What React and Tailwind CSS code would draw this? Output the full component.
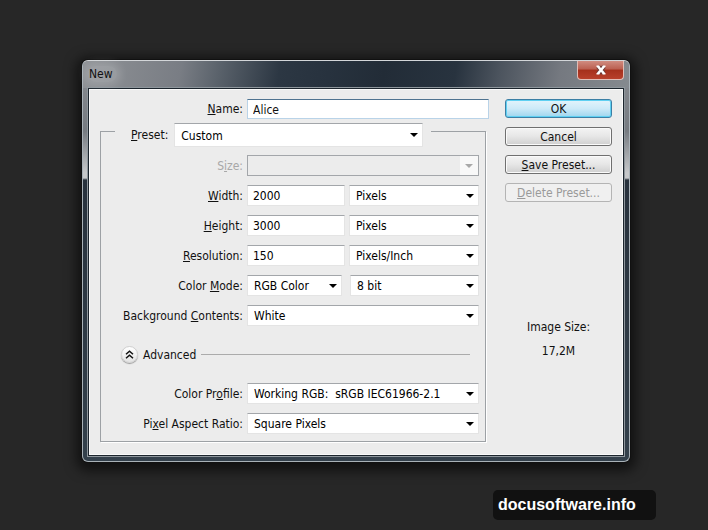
import { useState } from "react";

const inputBase =
  "h-[21px] min-w-0 bg-white border border-[#e4e4e4] border-t-[#a3a6aa] pt-px pl-[5px] text-black outline-none";

function Row({ id, label, children, disabled }) {
  return (
    <div className="flex items-center gap-1">
      <label
        htmlFor={id}
        className={`w-[142px] shrink-0 text-right whitespace-nowrap ${disabled ? "text-[#a8a8a8]" : ""}`}
      >
        {label}
      </label>
      <div className="flex flex-1 min-w-0 gap-1">{children}</div>
    </div>
  );
}

function Select({ id, options, className = "", selectClass = "h-[21px] pt-px", disabled, ...rest }) {
  return (
    <div className={`relative min-w-0 ${className}`}>
      <select
        id={id}
        disabled={disabled}
        className={`block w-full appearance-none border pl-[6px] pr-5 outline-none ${selectClass} ${
          disabled
            ? "border-[#a3a6aa] bg-[#ececec] opacity-100"
            : "bg-white border-[#e4e4e4] border-t-[#a3a6aa] text-black"
        }`}
        {...rest}
      >
        {options.map((o) => (
          <option key={o}>{o}</option>
        ))}
      </select>
      <span
        className={`pointer-events-none absolute inset-y-px right-px flex w-4 items-center justify-center ${
          disabled ? "w-[18px] bg-[#f8f8f8] text-[#a8a8a8]" : "text-black"
        }`}
      >
        <svg width="8" height="4" viewBox="0 0 8 4" fill="currentColor">
          <path d="M0 0h8L4 4z" />
        </svg>
      </span>
    </div>
  );
}

const buttonBase = "h-[19px] w-full rounded-[3px] border pt-px leading-4 whitespace-nowrap";
const plainButton =
  "border-[#707070] bg-linear-to-b from-[#f4f4f4] via-[#e6e6e6] to-[#cfcfcf] shadow-[inset_0_0_0_1px_#fafafa]";

export default function App() {
  const [name, setName] = useState("Alice");
  const [width, setWidth] = useState("2000");
  const [height, setHeight] = useState("3000");
  const [resolution, setResolution] = useState("150");

  return (
    <div className="flex min-h-screen flex-col bg-[#272727] pt-[60px] pl-[82px] pr-[78px] font-['DejaVu_Sans_Condensed','Noto_Sans',sans-serif] text-[12px] leading-4 text-[#111]">
      <div
        role="dialog"
        aria-labelledby="title"
        className="rounded-[6px] border border-[#a9b2b8] border-t-[#d3d6d9] bg-[linear-gradient(to_bottom,#8b8e93_0,#767b81_70px,#c6c8ca_112px,#c6c8ca_117px,#28323d_119px,#34414c_100%)] px-[5px] pb-[5px] shadow-[0_0_0_1px_#111,0_3px_12px_6px_rgba(0,0,0,0.55)]"
      >
        <div className="-mx-[5px] flex h-[27px] items-start justify-between rounded-t-[5px] bg-[linear-gradient(100deg,#8f9296_0%,#797d84_18%,#5a626b_25%,#2c3743_36%,#27323e_45%,#222c37_55%,#28333f_68%,#4c545e_76%,#757980_87%,#858a8f_100%)] px-[5px]">
          <h1
            id="title"
            className="mt-[5px] rounded-full bg-white/15 pr-1 pl-px shadow-[0_0_8px_4px_rgba(255,255,255,0.15)]"
          >
            New
          </h1>
          <button
            aria-label="Close"
            className="flex h-[19px] w-[47px] items-center justify-center rounded-b-[4px] border border-t-0 border-[#e0bdb6] bg-[linear-gradient(to_bottom,#d08c80_0%,#bb5f50_45%,#a5301c_50%,#b8402b_100%)]"
          >
            <svg width="12" height="10" viewBox="0 0 12 10">
              <path d="M3 1.5l6 7M9 1.5l-6 7" stroke="#6b3a36" strokeWidth="4.4" />
              <path d="M3 1.5l6 7M9 1.5l-6 7" stroke="#fff" strokeWidth="2.6" />
              <path d="M1.5 1.2h3M7.5 1.2h3M1.5 8.8h3M7.5 8.8h3" stroke="#fff" strokeWidth="1.4" />
            </svg>
          </button>
        </div>

        <div className="flex border border-[#1c252d] bg-[#ececec] pt-[10px] pr-[11px] pb-[13px] pl-[11px] shadow-[0_0_0_1px_#8f979d,inset_0_0_0_1px_#fafafa]">
          <form className="min-w-0 flex-1">
            <div className="flex items-center gap-1">
              <label htmlFor="name" className="w-[143px] shrink-0 text-right">
                <u>N</u>ame:
              </label>
              <input
                id="name"
                value={name}
                onChange={(e) => setName(e.target.value)}
                className="h-5 min-w-0 flex-1 border border-[#b9d3e8] border-t-[#4f7390] bg-white pt-px pl-[5px] outline-none"
              />
            </div>

            <fieldset className="mt-1 mr-[3px] min-w-0 border border-[#9da1a5] pr-[6px] pb-[7px] shadow-[1px_1px_0_#fff]">
              <legend className="ml-[14px] flex h-4 items-start gap-[6px] pr-2 pl-4">
                <label htmlFor="preset" className="mt-1">
                  <u>P</u>reset:
                </label>
                <Select
                  id="preset"
                  options={["Custom"]}
                  className="w-[249px]"
                  selectClass="h-6 pt-px"
                />
              </legend>

              <div className="flex flex-col gap-[9px] pt-4">
                <Row id="size" label={<>S<u>i</u>ze:</>} disabled>
                  <Select id="size" options={[""]} className="flex-1" disabled />
                </Row>
                <Row id="width" label={<><u>W</u>idth:</>}>
                  <input id="width" value={width} onChange={(e) => setWidth(e.target.value)} className={`${inputBase} w-[98px]`} />
                  <Select aria-label="Width unit" options={["Pixels"]} className="flex-1" />
                </Row>
                <Row id="height" label={<><u>H</u>eight:</>}>
                  <input id="height" value={height} onChange={(e) => setHeight(e.target.value)} className={`${inputBase} w-[98px]`} />
                  <Select aria-label="Height unit" options={["Pixels"]} className="flex-1" />
                </Row>
                <Row id="resolution" label={<><u>R</u>esolution:</>}>
                  <input id="resolution" value={resolution} onChange={(e) => setResolution(e.target.value)} className={`${inputBase} w-[98px]`} />
                  <Select aria-label="Resolution unit" options={["Pixels/Inch"]} className="flex-1" />
                </Row>
                <Row id="mode" label={<>Color <u>M</u>ode:</>}>
                  <Select id="mode" options={["RGB Color"]} className="mr-1 w-[95px]" />
                  <Select aria-label="Bit depth" options={["8 bit"]} className="flex-1" />
                </Row>
                <Row id="background" label={<>Background <u>C</u>ontents:</>}>
                  <Select id="background" options={["White"]} className="flex-1" />
                </Row>
              </div>

              <div className="my-5 mr-[9px] ml-5 flex items-center gap-[5px]">
                <button
                  type="button"
                  aria-label="Toggle advanced"
                  className="flex size-[17px] items-center justify-center rounded-full border border-[#d0d0d0] bg-linear-to-b from-white to-[#e4e4e4] shadow-[0_1px_1px_#9a9a9a]"
                >
                  <svg width="9" height="9" viewBox="0 0 9 9" fill="none" stroke="#111" strokeWidth="1.5">
                    <path d="M1 4.2l3.5-3 3.5 3M1 8.2l3.5-3 3.5 3" />
                  </svg>
                </button>
                <span>Advanced</span>
                <hr className="flex-1 border-[#ababab]" />
              </div>

              <div className="flex flex-col gap-[9px]">
                <Row id="profile" label={<>Color Pr<u>o</u>file:</>}>
                  <Select id="profile" options={["Working RGB:\u00a0 sRGB IEC61966-2.1"]} className="flex-1" />
                </Row>
                <Row id="ratio" label={<>Pi<u>x</u>el Aspect Ratio:</>}>
                  <Select id="ratio" options={["Square Pixels"]} className="flex-1" />
                </Row>
              </div>
            </fieldset>
          </form>

          <div className="ml-4 flex w-[107px] shrink-0 flex-col gap-[9px]">
            <button className={`${buttonBase} border-[#3c7fa5] bg-linear-to-b from-[#e3f4fc] via-[#cdeaf8] to-[#9fd6ee] shadow-[inset_0_0_0_1px_#5fd0f2]`}>
              OK
            </button>
            <button className={`${buttonBase} ${plainButton}`}>Cancel</button>
            <button className={`${buttonBase} ${plainButton}`}>
              <u>S</u>ave Preset...
            </button>
            <button disabled className={`${buttonBase} border-[#b4b4b4] bg-[#f0f0f0] text-[#9a9a9a]`}>
              <u>D</u>elete Preset...
            </button>
            <div className="mt-[108px] flex flex-col gap-2 text-center">
              <p>Image Size:</p>
              <p>17,2M</p>
            </div>
          </div>
        </div>
      </div>

      <a
        href="#"
        className="mt-7 -mr-[26px] h-[30px] w-[163px] self-end rounded-[5px] bg-[#111] pl-[5px] font-['Liberation_Sans',sans-serif] text-[16px] leading-[30px] font-bold text-white"
      >
        docusoftware.info
      </a>
    </div>
  );
}
